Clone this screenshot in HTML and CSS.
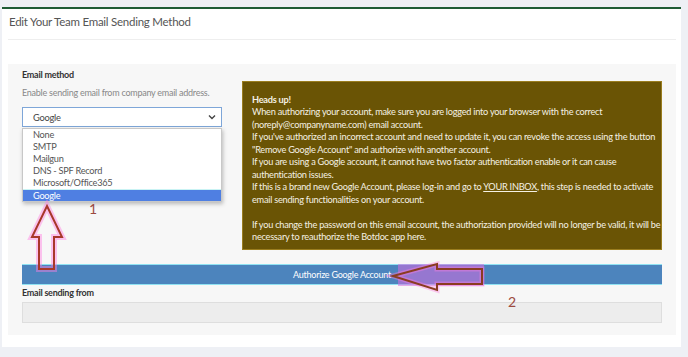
FILE: index.html
```html
<!DOCTYPE html>
<html>
<head>
<meta charset="utf-8">
<link rel="stylesheet" href="styles.css">
</head>
<body>
<div class="card">
  <div class="card-header"><h1 class="title">Edit Your Team Email Sending Method</h1></div>
  <div class="card-body">
    <div class="panel">
      <div class="row">
        <div class="left">
          <div class="label">Email method</div>
          <div class="help">Enable sending email from company email address.</div>
          <div class="select-wrap">
            <div class="select"><span>Google</span>
              <svg class="chev" width="8" height="6" viewBox="0 0 8 6"><path d="M1 1.5 L4 4.5 L7 1.5" fill="none" stroke="#444" stroke-width="1.4"/></svg>
            </div>
            <ul class="options">
              <li>None</li>
              <li>SMTP</li>
              <li>Mailgun</li>
              <li>DNS - SPF Record</li>
              <li>Microsoft/Office365</li>
              <li class="sel">Google</li>
            </ul>
          </div>
        </div>
        <div class="alert">
          <strong>Heads up!</strong><br>
          When authorizing your account, make sure you are logged into your browser with the correct<br>
          (noreply@companyname.com) email account.<br>
          If you've authorized an incorrect account and need to update it, you can revoke the access using the button<br>
          "Remove Google Account" and authorize with another account.<br>
          If you are using a Google account, it cannot have two factor authentication enable or it can cause<br>
          authentication issues.<br>
          If this is a brand new Google Account, please log-in and go to <u>YOUR INBOX</u>, this step is needed to activate<br>
          email sending functionalities on your account.<br>
          <br>
          If you change the password on this email account, the authorization provided will no longer be valid, it will be<br>
          necessary to reauthorize the Botdoc app here.
        </div>
      </div>
      <div class="btn">Authorize Google Account</div>
      <div class="label label2">Email sending from</div>
      <div class="input"></div>
    </div>
  </div>
</div>
<svg class="annot" width="688" height="357" viewBox="0 0 688 357">
  <polygon points="47,206 62,237 54,237 54,269 39,269 39,237 32,237" fill="none" stroke="#ff7ee0" stroke-opacity="0.45" stroke-width="6" stroke-linejoin="miter"/>
  <polygon points="47,206 62,237 54,237 54,269 39,269 39,237 32,237" fill="none" stroke="#a8382a" stroke-width="2"/>
  <rect x="398" y="264" width="86" height="22" fill="#d46ee0" fill-opacity="0.55"/>
  <polygon points="393,276 437,264 437,269 482,269 482,284 437,284 437,290" fill="none" stroke="#ff7ee0" stroke-opacity="0.4" stroke-width="5"/>
  <polygon points="393,276 437,264 437,269 482,269 482,284 437,284 437,290" fill="none" stroke="#8a3c22" stroke-width="2"/>
</svg>
<span class="num n1">1</span>
<span class="num n2">2</span>
</body>
</html>
```
FILE: styles.css
```css
html, body { margin: 0; padding: 0; }
body {
  background: #eef0f5;
  width: 688px;
  height: 357px;
  overflow: hidden;
  font-family: Lato, "Open Sans", sans-serif;
  letter-spacing: -0.25px;
  position: relative;
}
.card {
  margin: 7px 0 0 2px;
  width: 679px;
  height: 340px;
  background: #fff;
  border-top: 2px solid #1f5c36;
  box-sizing: border-box;
}
.card-header {
  margin: 0 5px 0 6px;
  height: 31px;
  border-bottom: 1px solid #eeeeee;
  box-sizing: border-box;
}
.title {
  margin: 0;
  padding: 5px 0 0 1px;
  font-size: 11.5px;
  line-height: 16px;
  font-weight: 400;
  color: #555;
}
.card-body {
  padding: 24px 5px 0 6px;
}
.panel {
  background: #f7f7f7;
  padding: 4px 14px 14px 14px;
  height: 271px;
  box-sizing: border-box;
}
.row {
  display: flex;
  gap: 20px;
}
.left { width: 200px; flex: none; }
.label {
  font-size: 9px;
  line-height: 14px;
  font-weight: 700;
  color: #333;
}
.help {
  margin-top: 4px;
  font-size: 9px;
  line-height: 14px;
  color: #888;
  white-space: nowrap;
}
.select-wrap { position: relative; margin-top: 7px; }
.select {
  height: 20px;
  border: 1px solid #7ea6d8;
  background: #fff;
  box-sizing: border-box;
  display: flex;
  align-items: center;
  justify-content: space-between;
  padding: 0 5px 0 10px;
  font-size: 9.3px;
  color: #444;
}
.options {
  position: absolute;
  top: 21px;
  left: 0;
  width: 200px;
  margin: 0;
  padding: 0;
  list-style: none;
  background: #fff;
  border: 1px solid #c8c8c8;
  box-sizing: border-box;
  box-shadow: 1px 2px 4px rgba(0,0,0,0.25);
  z-index: 2;
}
.options li {
  height: 12px;
  line-height: 12px;
  padding-left: 10px;
  font-size: 9.2px;
  color: #555;
}
.options li.sel {
  background: #4f7fe2;
  color: #fff;
  border-top: 1px solid #c9f3f4;
  height: 11px;
  line-height: 11px;
}
.alert {
  margin-top: 13px;
  width: 420px;
  height: 169px;
  box-sizing: border-box;
  background: #6a5405;
  border: 1px solid #9a7d1f;
  padding: 12px 9px 0 9px;
  font-size: 9.2px;
  line-height: 12.45px;
  color: #f5f1e4;
  white-space: nowrap;
}
.alert strong { font-weight: 700; }
.btn {
  margin-top: 14px;
  height: 21px;
  box-sizing: border-box;
  background: #4c84bd;
  border-top: 1px solid #8fe2f2;
  border-bottom: 1px solid #8fe2f2;
  color: #fff;
  font-size: 9px;
  line-height: 19px;
  text-align: center;
}
.label2 { margin-top: 2px; line-height: 12px; }
.input {
  margin-top: 3px;
  height: 21px;
  background: #ededed;
  border: 1px solid #dedede;
  box-sizing: border-box;
}
.annot {
  position: absolute;
  left: 0;
  top: 0;
  pointer-events: none;
  z-index: 5;
}
.num {
  position: absolute;
  font-size: 14px;
  line-height: 14px;
  color: #9c4a3f;
  font-family: Lato, sans-serif;
  letter-spacing: 0;
  z-index: 6;
}
.n1 { left: 89px; top: 202px; }
.n2 { left: 508px; top: 295px; }
```
